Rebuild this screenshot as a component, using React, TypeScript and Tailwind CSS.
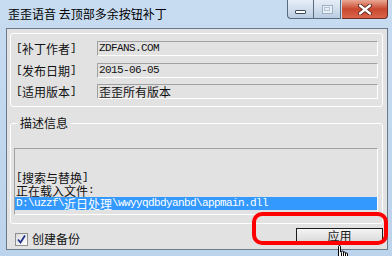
import React from 'react'

const CJK = /([\u3000-\u9fff\uff00-\uffef]+)/

// mixed text: CJK at 12px, latin as half-width mono like the old bitmap font
function Mix({ text }: { text: string }) {
	const parts = text.split(CJK).filter(Boolean)
	return (
		<>
			{parts.map((p, i) =>
				CJK.test(p) ? (
					<span key={i} className="font-['Noto_Sans_CJK_SC',sans-serif] text-[12px] leading-[13px]">
						{p}
					</span>
				) : (
					<span key={i} className="font-['Liberation_Mono',monospace] text-[11px] leading-[13px] tracking-[-0.6px]">
						{p}
					</span>
				)
			)}
		</>
	)
}

const rows = [
	{ label: '[补丁作者]', value: 'ZDFANS.COM' },
	{ label: '[发布日期]', value: '2015-06-05' },
	{ label: '[适用版本]', value: '歪歪所有版本' },
]

const memo = ['[搜索与替换]', '正在载入文件:']

function TitleButtons() {
	return (
		<div className="flex h-[19px]">
			<div className="flex w-[26px] items-end justify-center rounded-bl-[4px] border border-r-0 border-t-0 border-[#5b6b7e] bg-gradient-to-b from-[#e6eef8] via-[#d2deec] to-[#b9cce2] pb-[4px]">
				<div className="h-[4px] w-[11px] rounded-[1px] border border-[#3e4a58] bg-white" />
			</div>
			<div className="flex w-[28px] items-center justify-center border border-t-0 border-[#5b6b7e] bg-gradient-to-b from-[#e6eef8] via-[#d2deec] to-[#b9cce2]">
				<div className="flex h-[9px] w-[11px] items-center justify-center border border-[#9fb0c3] bg-[#e9eff6]">
					<div className="h-[4px] w-[6px] border border-[#b4c2d2]" />
				</div>
			</div>
			<div className="ml-[1px] flex w-[46px] items-center justify-center rounded-br-[4px] border border-l-0 border-t-0 border-[#6b2d25] bg-gradient-to-b from-[#e9a895] via-[#c9472f] to-[#d9654a]">
				<svg width="14" height="11" viewBox="0 0 14 11">
					<path d="M2 1.5 L12 9.5 M12 1.5 L2 9.5" stroke="#4a1a12" strokeWidth="4" strokeLinecap="round" />
					<path d="M2 1.5 L12 9.5 M12 1.5 L2 9.5" stroke="#ffffff" strokeWidth="2.4" strokeLinecap="round" />
				</svg>
			</div>
		</div>
	)
}

function Check() {
	return (
		<div className="flex h-[13px] w-[13px] items-center justify-center border border-[#8e8f8f] bg-gradient-to-br from-[#dcdcdc] to-[#ffffff]">
			<svg width="11" height="11" viewBox="0 0 11 11">
				<path d="M2 5.5 L4.5 8.5 L9 1.5" fill="none" stroke="#21308a" strokeWidth="1.8" />
			</svg>
		</div>
	)
}

export default function App() {
	return (
		<div className="relative h-[256px] w-[392px] overflow-hidden bg-gradient-to-b from-[#c7dcf1] to-[#bcd3ec] text-black">
			{/* title bar */}
			<div className="flex h-[28px] items-start pl-[8px] pr-[4px]">
				<div className="pt-[6px] font-['Noto_Sans_CJK_SC',sans-serif] text-[12px] leading-[16px]">
					歪歪语音 去顶部多余按钮补丁
				</div>
				<div className="ml-auto">
					<TitleButtons />
				</div>
			</div>

			{/* client area */}
			<div className="ml-[6px] flex h-[222px] w-[382px] flex-col border border-[#6b7a8b] bg-[#e2e2e2] pl-[3px] pr-[4px] pt-[4px] leading-[15px] text-[#111]">
				<div className="flex h-[74px] flex-col gap-[6px] rounded-[3px] border border-white pl-[5px] pt-[7px]">
					{rows.map((r, i) => (
						<div key={r.label} className={`flex h-[15px] items-center ${i === 1 ? 'mt-[1px]' : ''}`}>
							<div className="flex w-[81px] items-center whitespace-nowrap">
								<Mix text={r.label} />
							</div>
							<div className="flex h-[15px] w-[281px] items-center border border-b-white border-l-[#a0a0a0] border-r-white border-t-[#a0a0a0] pl-[1px]">
								<Mix text={r.value} />
							</div>
						</div>
					))}
				</div>

				<div className="relative mt-[16px] h-[101px] rounded-[3px] border border-white">
					<span className="absolute left-[7px] top-[-9px] bg-[#e2e2e2] px-[2px] font-['Noto_Sans_CJK_SC',sans-serif] text-[12px] leading-[16px]">
						描述信息
					</span>
					<div className="ml-[3px] mt-[24px] flex h-[67px] w-[364px] flex-col justify-end border border-b-white border-l-[#a0a0a0] border-r-white border-t-[#a0a0a0] pb-[4px]">
						{memo.map((m) => (
							<div key={m} className="flex h-[13px] items-center whitespace-nowrap px-[1px]">
								<Mix text={m} />
							</div>
						))}
						<div className="flex h-[13px] items-center whitespace-nowrap bg-[#3399ff] px-[1px] text-white">
							<Mix text="D:\uzzf\近日处理\wwyyqdbdyanbd\appmain.dll" />
						</div>
					</div>
				</div>

				<div className="mt-[4px] flex items-start justify-between">
					<div className="ml-[5px] mt-[4px] flex items-center gap-[4px]">
						<Check />
						<span className="font-['Noto_Sans_CJK_SC',sans-serif] text-[12px] leading-[14px]">创建备份</span>
					</div>
					<button className="flex h-[15px] w-[87px] items-center justify-center border border-[#1c1c1c] bg-gradient-to-b from-[#f4f4f4] to-[#dadada] font-['Noto_Sans_CJK_SC',sans-serif] text-[12px] leading-[13px] text-[#1a1a1a]">
						应用
					</button>
				</div>
			</div>

			{/* red annotation */}
			<div className="absolute left-[252px] top-[212px] h-[33px] w-[136px] rounded-[10px] border-[4px] border-[#ff0000]" />

			{/* hand cursor */}
			<svg className="absolute left-[333px] top-[245px]" width="16" height="20" viewBox="0 0 16 20">
				<path
					d="M5.5 1.5 Q5.5 0.5 6.5 0.5 Q7.5 0.5 7.5 1.5 L7.5 7 L8.5 7 Q8.5 6 9.5 6 Q10.5 6 10.5 7 L10.5 8 Q10.5 7 11.5 7 Q12.5 7 12.5 8 L12.5 9 Q12.5 8 13.5 8 Q14.5 8 14.5 9 L14.5 14 Q14.5 17 12.5 18.5 L7.5 18.5 L3 13.5 Q2 12.5 3 11.5 Q4 11 5.5 12.5 Z"
					fill="#ffffff"
					stroke="#000000"
					strokeWidth="1"
				/>
				<path d="M8.5 7.5 L8.5 11 M10.5 8 L10.5 11 M12.5 9 L12.5 11" stroke="#000" strokeWidth="1" />
			</svg>
		</div>
	)
}
